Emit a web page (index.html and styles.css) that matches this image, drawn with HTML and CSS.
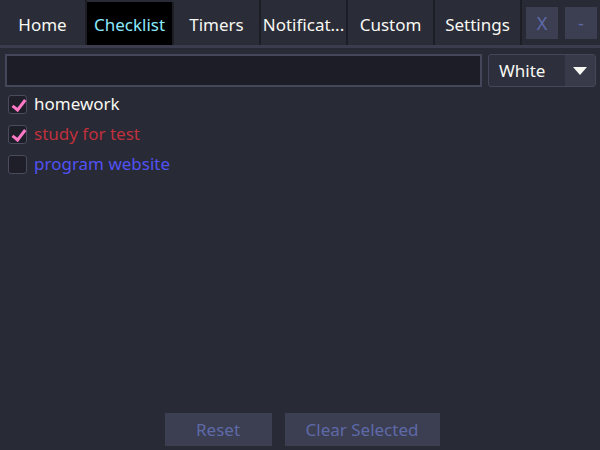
FILE: index.html
```html
<!DOCTYPE HTML>
<html>
<head>
	<meta charset="utf-8">
	<title>Checklist</title>
	<link rel="stylesheet" href="styles.css">
</head>
<body>
	<div class="tabs">
		<div class="tab">Home</div>
		<div class="tab tab-active">Checklist</div>
		<div class="tab">Timers</div>
		<div class="tab">Notificat...</div>
		<div class="tab">Custom</div>
		<div class="tab">Settings</div>
		<div class="winButtons">
			<button class="winButton">X</button>
			<button class="winButton">-</button>
		</div>
	</div>

	<div class="content">
		<div class="addRow">
			<input class="itemInput" type="text">
			<div class="colorSelect">
				<span class="colorSelect_value">White</span>
				<span class="colorSelect_arrow"></span>
			</div>
		</div>

		<div class="items">
			<label class="item"><span class="check checked"></span><span class="item_text white">homework</span></label>
			<label class="item"><span class="check checked"></span><span class="item_text red">study for test</span></label>
			<label class="item"><span class="check"></span><span class="item_text blue">program website</span></label>
		</div>

		<div class="actions">
			<button class="actionButton reset">Reset</button>
			<button class="actionButton clear">Clear Selected</button>
		</div>
	</div>
</body>
</html>
```

FILE: styles.css
```css
html, body {
	height: 100%;
}

body {
	margin: 0;
	background: #282a36;
	font-family: "Noto Sans", "Open Sans", sans-serif;
	font-size: 17px;
	color: #f8f8f2;
	display: flex;
	flex-direction: column;
	overflow: hidden;
}

.tabs {
	display: flex;
	height: 48px;
	padding-top: 2px;
	box-sizing: border-box;
	border-bottom: 3px solid #3b3d4f;
	background: #282a36;
}

.tab {
	width: 85px;
	border-right: 2px solid #1c1d25;
	display: flex;
	align-items: center;
	justify-content: center;
	white-space: nowrap;
	margin-top: -2px;
	padding-top: 4px;
	background: #2a2c38;
}

.tab-active {
	background: #000;
	color: #8be9fd;
	margin-top: 0;
	padding-top: 2px;
}

.winButtons {
	display: flex;
	gap: 7px;
	padding: 5px 0 0 4px;
}

.winButton {
	width: 32px;
	height: 32px;
	background: #3c3e52;
	border: none;
	color: #5e6aa8;
	font-family: "Noto Sans", sans-serif;
	font-size: 18px;
	padding: 0;
}

.content {
	flex: 1;
	display: flex;
	flex-direction: column;
	padding: 6px 4px 4px 5px;
}

.addRow {
	display: flex;
	gap: 6px;
	height: 33px;
}

.itemInput {
	flex: 1;
	margin: 0;
	background: #1c1d26;
	border: 2px solid #44475a;
	box-sizing: border-box;
}

.colorSelect {
	width: 108px;
	display: flex;
	background: #2d2f3d;
	border: 1px solid #44475a;
	border-radius: 3px;
	box-sizing: border-box;
}

.colorSelect_value {
	flex: 1;
	padding-left: 10px;
	display: flex;
	align-items: center;
}

.colorSelect_arrow {
	width: 30px;
	background: #383a4a;
	display: flex;
	align-items: center;
	justify-content: center;
}

.colorSelect_arrow::after {
	content: "";
	border-left: 7px solid transparent;
	border-right: 7px solid transparent;
	border-top: 8px solid #f8f8f2;
}

.items {
	flex: 1;
	padding-top: 2px;
	padding-left: 3px;
}

.item {
	display: flex;
	align-items: center;
	height: 30px;
	gap: 7px;
}

.check {
	width: 19px;
	height: 19px;
	box-sizing: border-box;
	background: #1e1f29;
	border: 1px solid #4a4c5e;
	border-radius: 3px;
	position: relative;
}

.checked::after {
	content: "";
	position: absolute;
	left: 6px;
	top: 1px;
	width: 5px;
	height: 11px;
	border-right: 3px solid #ff79c6;
	border-bottom: 3px solid #ff79c6;
	transform: rotate(38deg);
}

.item_text {
	margin-top: -2px;
}

.white { color: #f8f8f2; }
.red { color: #c0313c; }
.blue { color: #5252f2; }

.actions {
	display: flex;
	justify-content: center;
	gap: 13px;
	padding-left: 3px;
}

.actionButton {
	height: 33px;
	background: #3c3e52;
	border: none;
	color: #5e6aa8;
	font-family: "Noto Sans", sans-serif;
	font-size: 17px;
}

.reset {
	width: 107px;
}

.clear {
	width: 155px;
}
```
